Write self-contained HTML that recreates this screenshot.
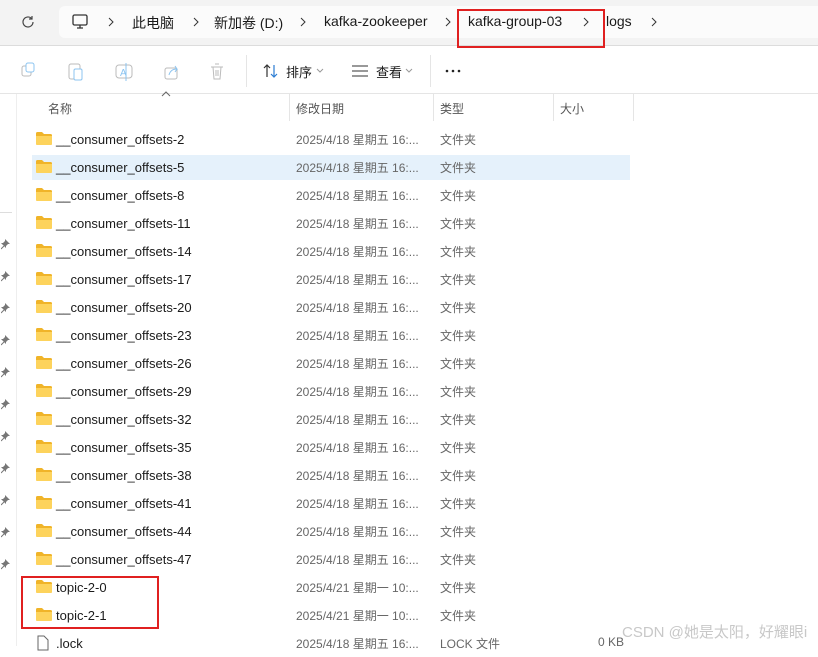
<!DOCTYPE html>
<html><head><meta charset="utf-8">
<style>
*{margin:0;padding:0;box-sizing:border-box}
body{width:818px;height:646px;overflow:hidden;background:#fff;position:relative;font-family:"Liberation Sans","Noto Sans CJK SC",sans-serif;color:#1a1a1a}
.abs{position:absolute}
.top{left:0;top:0;width:818px;height:46px;background:#f3f3f3;border-bottom:1px solid #dcdcdc}
.addr{left:59px;top:6px;width:759px;height:32px;background:#fbfbfb;border-radius:6px 0 0 6px}
.t{position:absolute;font-size:14px;white-space:nowrap}
.chev{position:absolute;top:16px}
.row{position:absolute;left:0;width:818px;height:28px}
.fold{position:absolute;left:36px;top:7px;width:16px;height:13px}
.nm{position:absolute;left:56px;top:7px;font-size:13px}
.dt{position:absolute;left:296px;top:6px;font-size:12px;color:#666}
.ty{position:absolute;left:440px;top:6px;font-size:12px;color:#666}
.hd{position:absolute;top:100px;font-size:12px;color:#555}
.pin{position:absolute;left:1px}
</style></head><body>
<div class="abs top"></div>
<div class="abs addr"></div>
<svg class="abs" style="left:19px;top:13px" width="18" height="18" viewBox="0 0 18 18"><path d="M14 9a5 5 0 1 1-1.6-3.7M13 3v3h-3" fill="none" stroke="#444" stroke-width="1.2"/></svg>
<svg class="abs" style="left:71px;top:13px" width="18" height="18" viewBox="0 0 18 18"><rect x="2" y="2" width="14" height="10" rx="1.5" fill="none" stroke="#333" stroke-width="1.3"/><path d="M6 15h6M9 12v3" stroke="#333" stroke-width="1.3"/></svg>
<svg class="abs chev" style="left:107px" width="8" height="12"><path d="M2 2l4 4-4 4" fill="none" stroke="#333"/></svg>
<span class="t" style="left:132px;top:13px">此电脑</span>
<svg class="abs chev" style="left:192px" width="8" height="12"><path d="M2 2l4 4-4 4" fill="none" stroke="#333"/></svg>
<span class="t" style="left:214px;top:13px">新加卷 (D:)</span>
<svg class="abs chev" style="left:299px" width="8" height="12"><path d="M2 2l4 4-4 4" fill="none" stroke="#333"/></svg>
<span class="t" style="left:324px;top:13px">kafka-zookeeper</span>
<svg class="abs chev" style="left:444px" width="8" height="12"><path d="M2 2l4 4-4 4" fill="none" stroke="#333"/></svg>
<span class="t" style="left:468px;top:13px">kafka-group-03</span>
<svg class="abs chev" style="left:582px" width="8" height="12"><path d="M2 2l4 4-4 4" fill="none" stroke="#333"/></svg>
<span class="t" style="left:606px;top:13px">logs</span>
<svg class="abs chev" style="left:650px" width="8" height="12"><path d="M2 2l4 4-4 4" fill="none" stroke="#333"/></svg>
<div class="abs" style="left:457px;top:9px;width:148px;height:39px;border:2px solid #e02020"></div>

<svg class="abs" style="left:18px;top:60px" width="200" height="24" viewBox="0 0 200 24">
<rect x="4" y="6" width="9" height="10" rx="2" fill="none" stroke="#bbb"/><rect x="8" y="3" width="8" height="9" rx="2" fill="#fff" stroke="#8cc4f0"/>
<rect x="51" y="4" width="11" height="15" rx="2" fill="none" stroke="#bbb"/><rect x="56" y="9" width="8" height="11" rx="1.5" fill="#fff" stroke="#8cc4f0"/>
<rect x="98" y="5" width="16" height="13" rx="3" fill="none" stroke="#bbb"/><text x="102" y="16" font-size="10" fill="#8cc4f0" font-family="Liberation Sans">A</text><path d="M108 3v18" stroke="#8cc4f0"/>
<rect x="147" y="8" width="12" height="11" rx="2" fill="none" stroke="#bbb"/><path d="M151 15c1-4 4-6 8-6l-2-3M159 9l-2 3" fill="none" stroke="#8cc4f0"/>
</svg>
<svg class="abs" style="left:208px;top:60px" width="20" height="24" viewBox="0 0 20 24"><path d="M3 7h12M7 4h4M5 7l1 12h6l1-12M8 10v6M10 10v6" fill="none" stroke="#bbb"/></svg>
<div class="abs" style="left:246px;top:55px;width:1px;height:32px;background:#e5e5e5"></div>
<svg class="abs" style="left:262px;top:63px" width="18" height="16" viewBox="0 0 18 16"><path d="M5 14V2M2 5l3-3 3 3" fill="none" stroke="#333" stroke-width="1.2"/><path d="M12 2v12M9 11l3 3 3-3" fill="none" stroke="#2b7cd3" stroke-width="1.2"/></svg>
<span class="t" style="left:286px;top:62px;font-size:13px">排序</span>
<svg class="abs" style="left:316px;top:68px" width="8" height="6"><path d="M1 1l3 3 3-3" fill="none" stroke="#999"/></svg>
<svg class="abs" style="left:351px;top:64px" width="18" height="14" viewBox="0 0 18 14"><path d="M1 2h16M1 7h16M1 12h16" stroke="#333" stroke-width="1.1"/></svg>
<span class="t" style="left:376px;top:62px;font-size:13px">查看</span>
<svg class="abs" style="left:405px;top:68px" width="8" height="6"><path d="M1 1l3 3 3-3" fill="none" stroke="#999"/></svg>
<div class="abs" style="left:430px;top:55px;width:1px;height:32px;background:#e5e5e5"></div>
<svg class="abs" style="left:445px;top:69px" width="18" height="4"><circle cx="2" cy="2" r="1.3" fill="#222"/><circle cx="8" cy="2" r="1.3" fill="#222"/><circle cx="14" cy="2" r="1.3" fill="#222"/></svg>
<div class="abs" style="left:0;top:93px;width:818px;height:1px;background:#e5e5e5"></div>

<div class="abs" style="left:16px;top:94px;width:1px;height:552px;background:#eee"></div>
<div class="abs" style="left:0;top:212px;width:12px;height:1px;background:#ddd"></div>

<svg class="abs" style="left:161px;top:91px" width="10" height="6"><path d="M1 5l4-4 4 4" fill="none" stroke="#666"/></svg>
<span class="hd" style="left:48px">名称</span>
<div class="abs" style="left:289px;top:94px;width:1px;height:27px;background:#e5e5e5"></div>
<span class="hd" style="left:296px">修改日期</span>
<div class="abs" style="left:433px;top:94px;width:1px;height:27px;background:#e5e5e5"></div>
<span class="hd" style="left:440px">类型</span>
<div class="abs" style="left:553px;top:94px;width:1px;height:27px;background:#e5e5e5"></div>
<span class="hd" style="left:560px">大小</span>
<div class="abs" style="left:633px;top:94px;width:1px;height:27px;background:#e5e5e5"></div>

<div class="abs" style="left:32px;top:155px;width:598px;height:25px;background:#e5f1fb"></div>

<div id="rows"></div>
<div class="abs" style="left:21px;top:576px;width:138px;height:53px;border:2px solid #e02020"></div>
<span class="t" style="left:622px;top:621px;font-size:15px;color:#c8c8c8">CSDN @她是太阳，好耀眼i</span>
<script>
var n=[2,5,8,11,14,17,20,23,26,29,32,35,38,41,44,47],h="";
function row(i,name,dt,ty,isFile,sz){var y=125+28*i;
var ic=isFile?'<svg class="fold" style="left:37px;top:6px;width:12px;height:16px" viewBox="0 0 12 16"><path d="M1 1h6l4 4v10H1z" fill="#fff" stroke="#666"/></svg>':
'<svg class="fold" viewBox="0 0 16 13"><path d="M0 1.5Q0 0 1.5 0H6l2 2h6.5Q16 2 16 3.5V11.5Q16 13 14.5 13H1.5Q0 13 0 11.5z" fill="#f0b429"/><path d="M0 4h16v7.5Q16 13 14.5 13H1.5Q0 13 0 11.5z" fill="#fdd35c"/></svg>';
h+='<div class="row" style="top:'+y+'px">'+ic+'<span class="nm">'+name+'</span><span class="dt">'+dt+'</span><span class="ty">'+ty+'</span>'+(sz?'<span class="ty" style="left:598px">'+sz+'</span>':'')+'</div>';}
n.forEach(function(v,i){row(i,"__consumer_offsets-"+v,"2025/4/18 星期五 16:...","文件夹");});
row(16,"topic-2-0","2025/4/21 星期一 10:...","文件夹");
row(17,"topic-2-1","2025/4/21 星期一 10:...","文件夹");
row(18,".lock","2025/4/18 星期五 16:...","LOCK 文件",true,"0 KB");
document.getElementById("rows").innerHTML=h;
var ps="";
for(var k=0;k<11;k++){ps+='<svg class="pin" style="top:'+(238+32*k)+'px" width="10" height="12" viewBox="0 0 10 12"><path d="M4 1l5 5-2 0-2 2 0 2-5-5 2 0 2-2z" fill="#777"/><path d="M3 8L0 11" stroke="#777"/></svg>';}
document.body.insertAdjacentHTML("beforeend",ps);
</script>
</body></html>
